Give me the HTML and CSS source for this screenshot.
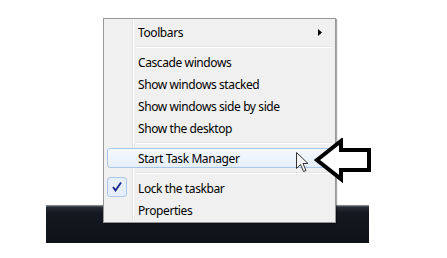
FILE: index.html
```html
<!DOCTYPE html>
<html lang="en">
<head>
    <meta charset="UTF-8">
    <title>Taskbar menu</title>
    <link rel="stylesheet" href="styles.css">
</head>
<body>
    <div class="stage">
        <div class="taskbar"></div>

        <div class="menu">
            <div class="item has-sub">Toolbars
                <svg class="sub-arrow" width="4" height="7" viewBox="0 0 4 7"><path d="M0 0 L4 3.5 L0 7 Z" fill="#000"/></svg>
            </div>
            <div class="sep"></div>
            <div class="item">Cascade windows</div>
            <div class="item">Show windows stacked</div>
            <div class="item">Show windows side by side</div>
            <div class="item">Show the desktop</div>
            <div class="sep"></div>
            <div class="item hover">Start Task Manager</div>
            <div class="sep"></div>
            <div class="item checked">
                <span class="check">
                    <svg width="10" height="10" viewBox="0 0 10 10"><path d="M1 5 L3.5 8.5 L9 0.5" fill="none" stroke="#15218c" stroke-width="1.8"/></svg>
                </span>
                Lock the taskbar
            </div>
            <div class="item">Properties</div>
        </div>

        <svg class="pointer" width="13" height="21" viewBox="0 0 13 21">
            <path d="M0.5 0.5 L0.5 16.5 L4.5 12.5 L7.5 19.5 L10 18.5 L7 11.5 L12 11.5 Z" fill="#f4f4f4" stroke="#333" stroke-width="1"/>
        </svg>

        <svg class="big-arrow" width="60" height="46" viewBox="0 0 60 46">
            <path d="M3 22 L27 3 L27 12 L55 12 L55 32 L27 32 L27 41 Z" fill="#fff" stroke="#000" stroke-width="4" stroke-linejoin="miter"/>
        </svg>
    </div>
</body>
</html>
```

FILE: styles.css
```css
body {
    margin: 0;
    background: #fff;
    font-family: "Noto Sans", "Open Sans", sans-serif;
}
.stage {
    position: relative;
    width: 447px;
    height: 258px;
    padding-top: 205px;
    box-sizing: border-box;
}
.taskbar {
    margin-left: 46px;
    width: 323px;
    height: 38px;
    background: linear-gradient(#8c939b 0, #6a727c 1px, #262c34 2px, #141921 8px, #0d1118 100%);
}
.menu {
    position: absolute;
    left: 103px;
    top: 18px;
    width: 233px;
    height: 205px;
    box-sizing: border-box;
    padding: 2px;
    background: #f0f0f0;
    border: 1px solid #979797;
    box-shadow: 1px 1px 1px rgba(0, 0, 0, 0.35);
}
.menu::before {
    content: '';
    position: absolute;
    top: 2px;
    bottom: 2px;
    left: 28px;
    width: 1px;
    background: #e2e3e3;
    border-right: 1px solid #fff;
}
.item {
    position: relative;
    display: flex;
    align-items: center;
    height: 22px;
    padding-left: 32px;
    font-size: 12px;
    letter-spacing: -0.4px;
    color: #000;
    box-sizing: border-box;
}
.sub-arrow {
    position: absolute;
    right: 11px;
    top: 8px;
}
.sep {
    height: 8px;
    margin-left: 28px;
    position: relative;
}
.sep::after {
    content: '';
    position: absolute;
    left: 2px;
    right: 1px;
    top: 3px;
    height: 1px;
    background: #e2e3e3;
    border-bottom: 1px solid #fff;
}
.item.hover {
    margin: 1px 1px;
    height: 20px;
    padding-left: 30px;
    border: 1px solid #a8c6eb;
    border-radius: 3px;
    background: linear-gradient(#f5f9fd, #e6eef9);
}
.check {
    position: absolute;
    left: 1px;
    top: 0;
    width: 20px;
    height: 20px;
    box-sizing: border-box;
    border: 1px solid #aac7ec;
    border-radius: 3px;
    background: #e6eef9;
    display: flex;
    align-items: center;
    justify-content: center;
}
.pointer {
    position: absolute;
    left: 296px;
    top: 152px;
}
.big-arrow {
    position: absolute;
    left: 314px;
    top: 138px;
}
```
